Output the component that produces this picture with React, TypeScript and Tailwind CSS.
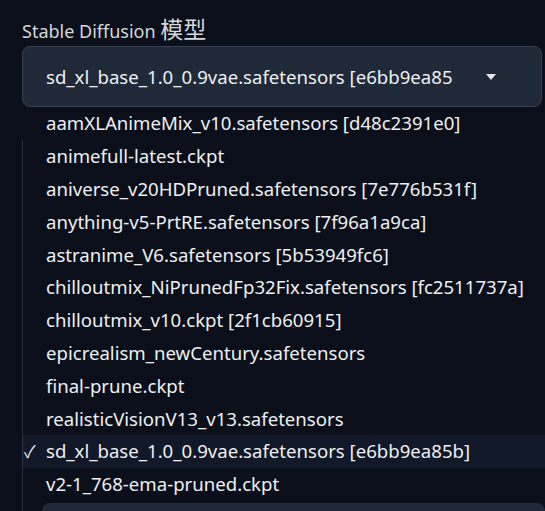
import React from 'react';

const models = [
  'aamXLAnimeMix_v10.safetensors [d48c2391e0]',
  'animefull-latest.ckpt',
  'aniverse_v20HDPruned.safetensors [7e776b531f]',
  'anything-v5-PrtRE.safetensors [7f96a1a9ca]',
  'astranime_V6.safetensors [5b53949fc6]',
  'chilloutmix_NiPrunedFp32Fix.safetensors [fc2511737a]',
  'chilloutmix_v10.ckpt [2f1cb60915]',
  'epicrealism_newCentury.safetensors',
  'final-prune.ckpt',
  'realisticVisionV13_v13.safetensors',
  'sd_xl_base_1.0_0.9vae.safetensors [e6bb9ea85b]',
  'v2-1_768-ema-pruned.ckpt',
];

const selected = 'sd_xl_base_1.0_0.9vae.safetensors [e6bb9ea85b]';

export default function App() {
  return (
    <div
      className="h-[511px] w-[545px] overflow-hidden bg-[#0b0f19] pl-[22px] pt-[16px]"
      style={{ fontFamily: '"Noto Sans", "Noto Sans CJK SC", sans-serif' }}
    >
      <div className="h-[26px] text-[18px] leading-[26px] text-[#d4d7dc]">
        Stable Diffusion <span className="text-[23px] leading-[26px]">模型</span>
      </div>

      <div className="mt-[4px] flex h-[61px] w-[520px] items-center rounded-lg border border-[#374151] bg-[#1f2937] pl-[23px]">
        <span className="w-[414px] whitespace-nowrap text-[18.6px] text-[#eef0f3]">
          sd_xl_base_1.0_0.9vae.safetensors [e6bb9ea85
        </span>
        <svg width="12" height="8" viewBox="0 0 12 8" className="ml-[25px] shrink-0">
          <path d="M1 1h10L6 7z" fill="#e5e7eb" />
        </svg>
      </div>

      <ul className="w-[540px] text-[18.6px] text-[#eef0f3]">
        {models.map((m, i) => {
          const active = m === selected;
          return (
            <li
              key={m}
              className={`flex h-[32.8px] items-center whitespace-nowrap ${i > 0 ? 'border-l border-[#2b3240]' : 'pl-px'} ${active ? 'bg-[#111827]' : ''}`}
            >
              <span className="w-[23px] shrink-0 pl-[1px] text-[17px]">{active ? '✓' : ''}</span>
              <span>{m}</span>
            </li>
          );
        })}
      </ul>
      <div className="flex">
        <div className="w-px self-stretch bg-[#2b3240]" />
        <div className="ml-[19px] mt-[2px] h-[20px] flex-1 rounded-t-lg bg-[#1f2937]" />
      </div>
    </div>
  );
}
